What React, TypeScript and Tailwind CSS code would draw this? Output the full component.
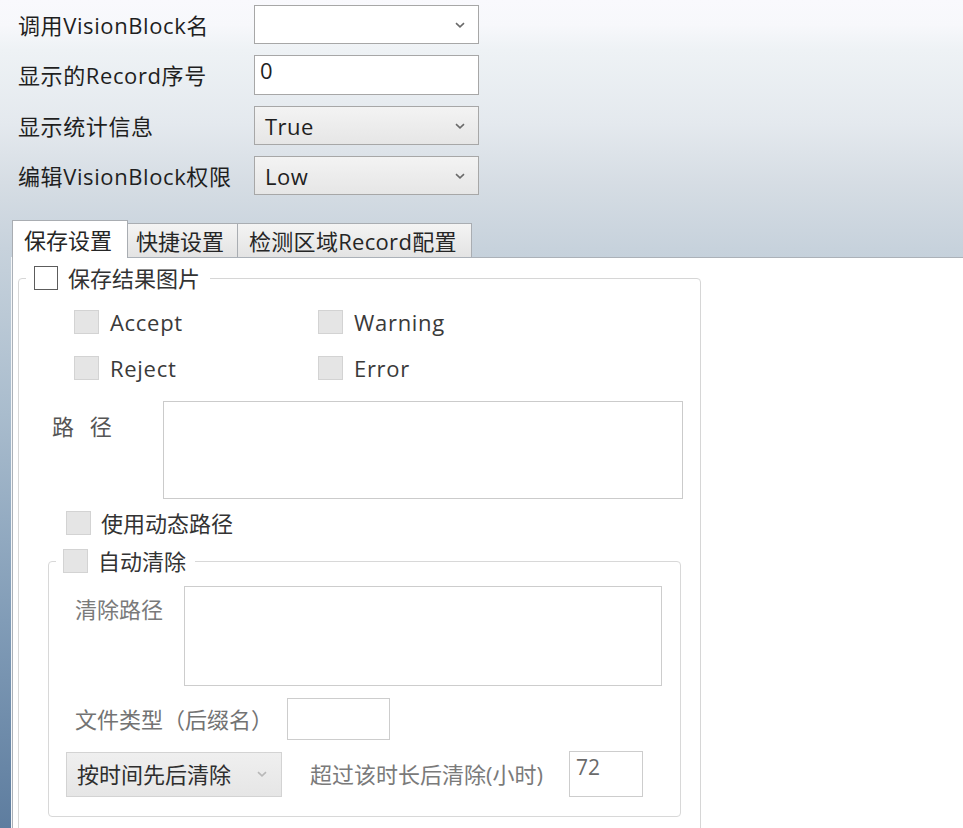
import React from "react";

function Chevron({ color = "#6a6a6a" }: { color?: string }) {
  return (
    <svg width="10" height="6" viewBox="0 0 10 6" className="block">
      <path d="M1 1.2 L5 4.8 L9 1.2" fill="none" stroke={color} strokeWidth="1.6" />
    </svg>
  );
}

function Box({ enabled }: { enabled?: boolean }) {
  return enabled ? (
    <span className="block w-[24px] h-[24px] border border-[#5c5c5c] bg-white shrink-0" />
  ) : (
    <span className="block w-[25px] h-[24px] border border-[#d3d3d3] bg-[#e5e5e5] shrink-0" />
  );
}

function Row({ label, children }: { label: string; children: React.ReactNode }) {
  return (
    <div className="flex items-center">
      <div className="w-[236px] text-[22px] leading-none text-[#1f1f1f] tracking-[0.6px]">{label}</div>
      {children}
    </div>
  );
}

function Combo({ value, white }: { value: string; white?: boolean }) {
  return (
    <div
      className={
        white
          ? "w-[225px] h-[39px] border border-[#a7a7a7] bg-white flex items-center justify-between pl-[10px] pr-[13px]"
          : "w-[225px] h-[39px] border border-[#a7a7a7] bg-[linear-gradient(180deg,#f3f3f3,#e6e6e6)] flex items-center justify-between pl-[10px] pr-[13px]"
      }
    >
      <span className="text-[22px] leading-none text-[#1f1f1f] tracking-[0.5px]">{value}</span>
      <Chevron />
    </div>
  );
}

export default function App() {
  return (
    <div className="w-[963px] h-[828px] overflow-hidden font-['Open_Sans','Noto_Sans_CJK_SC',sans-serif] bg-[linear-gradient(180deg,#f9f9fd_0%,#f7f8fb_3%,#eef2f5_6%,#e4e9ee_15%,#d6dde4_22%,#c7d2dc_30%,#a9bccd_50%,#819cb7_75%,#5e7d9f_100%)]">
      {/* top form */}
      <div className="pl-[18px] pt-[5px] flex flex-col gap-[11px]">
        <Row label="调用VisionBlock名">
          <Combo value="" white />
        </Row>
        <Row label="显示的Record序号">
          <div className="w-[225px] h-[40px] border border-[#a7a7a7] bg-white pl-[5px] pt-[3px] text-[22px] leading-none text-[#1f1f1f]">
            0
          </div>
        </Row>
        <Row label="显示统计信息">
          <Combo value="True" />
        </Row>
        <Row label="编辑VisionBlock权限">
          <Combo value="Low" />
        </Row>
      </div>

      {/* tabs */}
      <div className="mt-[25px] flex items-end pl-[12px] h-[37px]">
        <div className="relative z-10 -mb-px h-[38px] w-[116px] bg-white border border-b-0 border-[#a9adb2] pl-[11px] flex items-center text-[22px] leading-none text-[#262626]">
          保存设置
        </div>
        <div className="h-[34px] w-[110px] border border-b-0 border-l-0 border-[#a9adb2] bg-[linear-gradient(180deg,#f4f4f4,#e3e3e3)] pl-[8px] flex items-center text-[22px] leading-none text-[#262626]">
          快捷设置
        </div>
        <div className="h-[34px] w-[234px] border border-b-0 border-l-0 border-[#a9adb2] bg-[linear-gradient(180deg,#f4f4f4,#e3e3e3)] pl-[11px] flex items-center text-[22px] leading-none text-[#262626] tracking-[0.3px]">
          检测区域Record配置
        </div>
      </div>

      {/* tab page */}
      <div className="ml-[12px] h-[600px] bg-white border-l border-t border-[#abb1b8] shadow-[-1px_0_0_#f4f6f8] pl-[5px] pt-[7px]">
        <fieldset className="w-[683px] border border-[#d6d6d6] rounded-[4px] pb-[24px]">
          <legend className="ml-[7px] pl-[8px] pr-[10px] flex items-center gap-[10px] h-[26px]">
            <Box enabled />
            <span className="text-[22px] leading-none text-[#333]">保存结果图片</span>
          </legend>

          <div className="mt-[19px] ml-[55px] grid grid-cols-[244px_auto] gap-y-[22px]">
            {["Accept", "Warning", "Reject", "Error"].map((t) => (
              <div key={t} className="flex items-center gap-[11px]">
                <Box />
                <span className="text-[22px] leading-none text-[#3a3a3a] tracking-[0.7px]">{t}</span>
              </div>
            ))}
          </div>

          <div className="mt-[21px] ml-[33px] flex items-start">
            <div className="w-[111px] pt-[14px] text-[22px] leading-none text-[#555] [word-spacing:10px]">路 径</div>
            <div className="w-[520px] h-[98px] border border-[#cbcbcb] bg-white" />
          </div>

          <div className="mt-[12px] ml-[47px] flex items-center gap-[10px]">
            <Box />
            <span className="text-[22px] leading-none text-[#333]">使用动态路径</span>
          </div>

          <fieldset className="mt-[13px] ml-[29px] w-[633px] border border-[#d8d8d8] rounded-[4px] pb-[19px]">
            <legend className="ml-[7px] pl-[7px] pr-[9px] flex items-center gap-[10px] h-[26px]">
              <Box />
              <span className="text-[22px] leading-none text-[#333]">自动清除</span>
            </legend>

            <div className="mt-[12px] ml-[26px] flex items-start">
              <div className="w-[109px] pt-[12px] text-[22px] leading-none text-[#7a7a7a]">清除路径</div>
              <div className="w-[478px] h-[100px] border border-[#cdcdcd] bg-white" />
            </div>

            <div className="mt-[12px] ml-[26px] flex items-center">
              <div className="w-[212px] text-[22px] leading-none text-[#737373]">文件类型（后缀名）</div>
              <div className="w-[103px] h-[42px] border border-[#cdcdcd] bg-white" />
            </div>

            <div className="mt-[11px] ml-[17px] flex items-center">
              <div className="w-[216px] h-[45px] border border-[#d3d3d3] bg-[linear-gradient(180deg,#efefef,#e6e6e6)] flex items-center justify-between pl-[10px] pr-[14px]">
                <span className="text-[22px] leading-none text-[#2e2e2e]">按时间先后清除</span>
                <Chevron color="#b8b8b8" />
              </div>
              <div className="ml-[28px] w-[259px] text-[22px] leading-none text-[#7a7a7a]">超过该时长后清除(小时)</div>
              <div className="w-[74px] h-[46px] border border-[#cdcdcd] bg-white pl-[6px] pt-[5px] text-[21px] leading-none text-[#6a6a6a]">
                72
              </div>
            </div>
          </fieldset>
        </fieldset>
      </div>
    </div>
  );
}
